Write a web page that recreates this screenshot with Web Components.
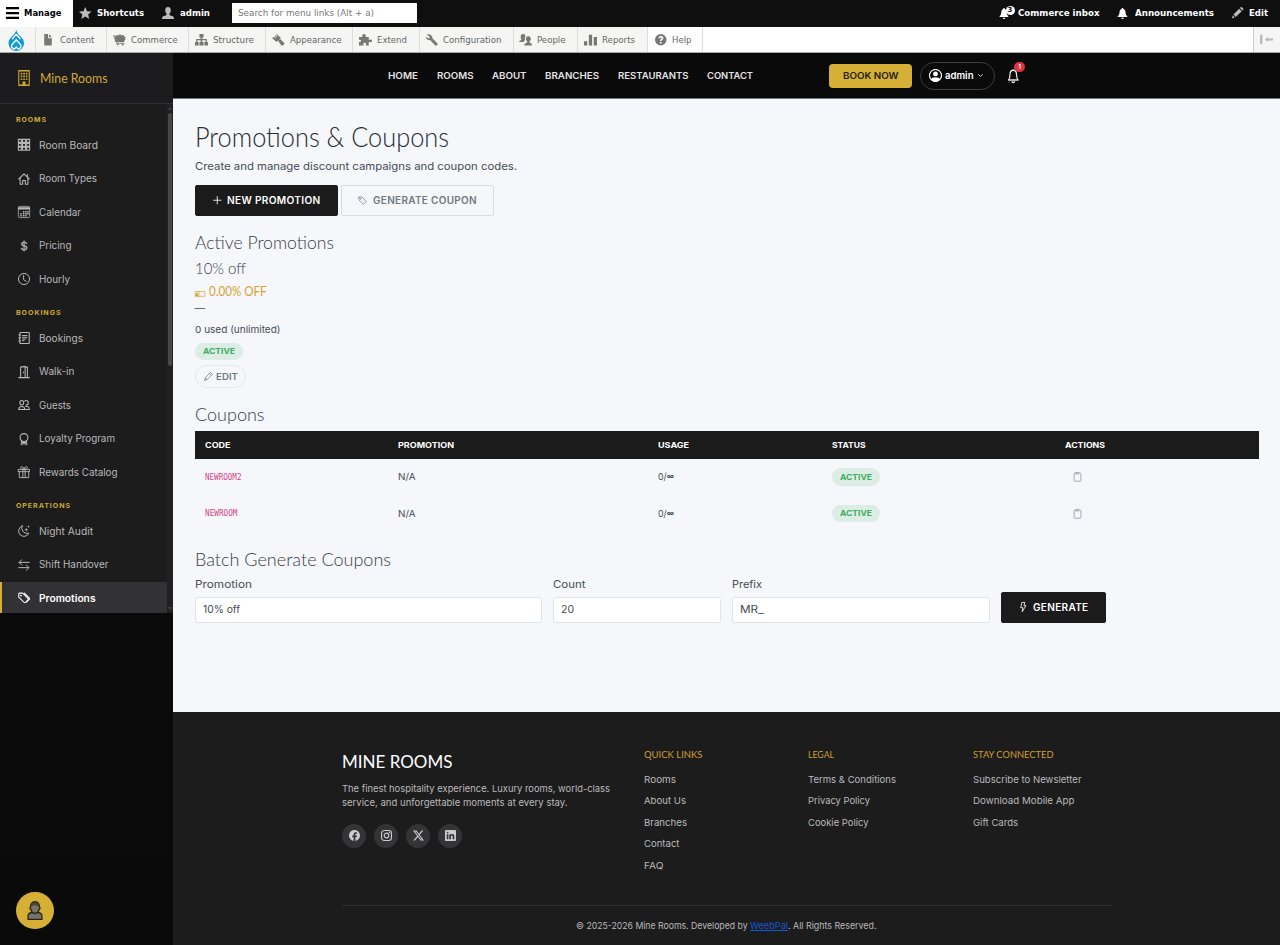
<!DOCTYPE html>
<html lang="en">
<head>
<meta charset="utf-8">
<title>Promotions &amp; Coupons | Mine Rooms</title>
<style>
html,body{margin:0;height:100%;background:#f5f7fb}
body{font-family:Inter,"Open Sans",sans-serif;font-size:9.8px;color:#454b55;overflow:hidden}
</style>
</head>
<body>
<app-shell></app-shell>
<script>
const def = (name, css, html, setup) => customElements.define(name, class extends HTMLElement {
  connectedCallback() {
    if (this.shadowRoot) return;
    const root = this.attachShadow({mode: 'open'});
    root.innerHTML = `<style>*{box-sizing:border-box}${css}</style>` + (typeof html === 'function' ? html(this) : html);
    if (setup) setup(this, root);
  }
});

/* Icon set, drawn on a 16-unit grid */
const F = d => `<path d="${d}" fill="currentColor" fill-rule="evenodd"/>`;
const S = (d, w = 1) => `<path d="${d}" fill="none" stroke="currentColor" stroke-width="${w}" stroke-linecap="round" stroke-linejoin="round"/>`;
const grid9 = [1, 6.3, 11.6].map(y => [0.5, 6, 11.5].map(x => `M${x} ${y - .5}h4v3.800h-4z`).join('')).join('');
const windows = [2.8, 5.6, 8.4].map(y => [3.6, 7, 10.4].map(x => `M${x} ${y}h2.200v1.600h-2.200z`).join('')).join('');
const ICONS = {
  menu: F('M0 0h16v3H0zM0 6.5h16v3H0zM0 13h16v3H0z'),
  star: F('M8 0l2.3 5.3 5.7.5-4.3 3.8L13 15.5 8 12.3 3 15.5l1.300-5.900L0 5.800l5.700-.5z'),
  user: F('M8 0c2.300 0 3.700 1.700 3.700 4.200 0 2-.7 3.300-1.700 4.300v1.700c.4 1 1.600 1.200 3.300 1.700 1.700.5 2.700 1.100 2.700 4.100H0c0-3 1-3.600 2.700-4.100C4.400 11.400 5.600 11.200 6 10.200V8.500C5 7.500 4.300 6.200 4.300 4.200 4.300 1.700 5.700 0 8 0z'),
  file: F('M2 0h6v6h6v10H2zM9.500 0L14 4.500H9.500z'),
  cart: F('M0 2h2.500L4 3.500 4.500 1 7 2l1.500-2L10.500 2l2.500-1 .5 2.500L16 4l-1.500 2.500 1 1.500-1.500 1v2.500H4.500l.5 1.500h9v1H13a1.300 1.300 0 11-2 0H7a1.300 1.300 0 11-2.500 0L3.500 11 2 10l1-2-2-1.500 1-1.500L1.500 3.500H0z'),
  tree: F('M5.500 0h5v5H9v2h5.500v4H16v5h-4.500v-5H13V8.700H9V11h1.500v5h-5v-5H7V8.700H3V11h1.500v5H0v-5h1.500V7H7V5H5.500z'),
  paint: F('M6 0l5 5.500L5.500 11 0 5.500 2 4l2 2 .8-.8-2-2L4 2l2 2 .7-.7L5 1zM10 7l5.500 6L14 15.500l-2.500.5-4-6.500z'),
  puzzle: F('M4 2.500C4 1 5 0 6.200 0s2.200 1 2.200 2.500L8 4h4v4h1.500C14.500 7 16 7.500 16 9.500s-1.500 2.500-2.500 1.500H12v5H8.500v-2C9 12.500 8 12 7 12s-2 .5-1.500 2v2H0v-5c2 .3 2.500-.5 2.500-1.500S2 7.700 0 8V4h4.300z'),
  wrench: F('M1 .5L5 4l-.3 2L2.500 6 0 3.500C-.5 6 1.500 9 5.500 8.500L12 15.500c1 1 2.500.5 3-.2.700-.8.800-1.800 0-2.600L8.500 6C9 2.500 5-.8 1 .5z'),
  people: F('M5 0c2 0 3 1.500 3 3.500C7 4.500 7 6 7.500 8c-.5 1-.7 2-2 3H0c0-2 3-2 3-3.500C1.500 5 1.500 0 5 0zM11.500 3c2 0 3 1.300 3 3.500 0 1.500-.6 2.500-1.500 3.500v1.500c.5 1 3 1 3 4.500H6.500c0-3.500 3-3.500 3.500-4.500V10C9 9 8.500 8 8.500 6.500c0-2.200 1-3.500 3-3.500z'),
  bars: F('M0 10h4v6H0zM6 1h4v15H6zM12 4h4v12h-4z'),
  help: F('M8 0a8 8 0 110 16A8 8 0 018 0zM4.700 6h2.200c0-.9.500-1.300 1.200-1.300s1.200.4 1.200 1.100c0 1.200-2.500 1.300-2.500 4h2.200c0-1.600 2.700-1.900 2.700-4.200C11.700 3.700 10.300 2.700 8.200 2.700 6 2.700 4.700 4 4.700 6zM6.800 11v2.300h2.300V11z'),
  bellf: F('M8 0c1 0 1.300.6 1.300 1.500C11.500 2 12.200 4 12.400 6.500c.2 3.500 1.600 4.500 3.100 6.500H.5C2 11 3.400 10 3.600 6.500 3.800 4 4.500 2 6.700 1.500 6.700.6 7 0 8 0zM6 14h4a2 2 0 01-4 0z'),
  pencilf: F('M0 16l1-4.500L3.800 14.500zM2 10.500L10 2.500l3.500 3.500-8.300 8zM11 1.500L12.500 0C13.500-.3 16.300 2.300 16 3.500L14.500 5z'),
  collapse: F('M0 1h3v14H0zM6 8l4-3.500v2h6v3h-6v2z'),
  building: S('M1 .7h14v14.600H1z', 1.4) + F(windows + 'M6 11.500h4v4H6z'),
  grid: `<path d="${grid9}" fill="none" stroke="currentColor" stroke-width="1.400"/>`,
  house: S('M1 8L8 1.200 15 8M2.800 6.500v8.500h3.400v-5h3.600v5h3.400V6.500M12.500 2v3', 1.4),
  calendar: `<rect x=".5" y=".5" width="15" height="15" rx="1.500" fill="none" stroke="currentColor"/>` + F('M0 1.500h16v3H0zM6.500 6.500h2v2h-2zM9.500 6.500h2v2h-2zM12.200 6.500h2v2h-2zM3 9.300h2v2H3zM6.500 9.300h2v2h-2zM9.500 9.300h2v2h-2zM12.200 9.300h2v2h-2zM3 12h2v2H3zM6.500 12h2v2h-2zM9.500 12h2v2h-2z'),
  dollar: `<g stroke="currentColor" stroke-width=".5">` + F('M4 10.781c.148 1.667 1.513 2.850 3.591 3.003V15h1.043v-1.216c2.270-.179 3.678-1.438 3.678-3.300 0-1.590-.947-2.510-2.956-3.028l-.722-.187V3.467c1.122.110 1.879.714 2.070 1.616h1.470c-.166-1.600-1.540-2.748-3.540-2.875V1H7.591v1.233c-1.939.230-3.270 1.472-3.270 3.156 0 1.454.966 2.483 2.661 2.917l.610.162v4.031c-1.149-.170-1.940-.8-2.131-1.718H4zm3.391-3.836c-1.043-.263-1.600-.825-1.600-1.616 0-.944.704-1.641 1.800-1.828v3.495l-.2-.05zm1.591 1.872c1.287.323 1.852.859 1.852 1.769 0 1.097-.826 1.828-2.200 1.939V8.730l.348.086z') + '</g>',
  clock: `<circle cx="8" cy="8" r="7.400" fill="none" stroke="currentColor" stroke-width="1.300"/>` + S('M7.500 3.500v5.500l3.500 2', 1.3),
  journal: `<rect x="2.500" y=".7" width="12.500" height="14.600" rx="1" fill="none" stroke="currentColor" stroke-width="1.400"/>` + S('M1 4h2.500M1 8h2.500M1 12h2.500M6 4.700h6M6 7h6M6 9.300h4.500M6 11.500h2', 1.3),
  door: S('M1 15.500h14M3.500 15V1.500l6-1V15M9.500 1.500H12.500V15M7.300 8v1', 1.4),
  guests: S('M1 14c0-3 1.500-4 4-4s4 1 4 4zM5 8a2.500 3 0 100-6 2.500 3 0 000 6zM11 8a2.500 2.800 0 100-6 2.700 2.700 0 00-2 .8M10 9.800c3.500-.5 5 1.200 5 4.200H9', 1.4),
  award: `<circle cx="8" cy="6" r="5.200" fill="none" stroke="currentColor" stroke-width="1.400"/>` + S('M4.500 10.500V15.500L8 14l3.500 1.500V10.500M6 12.500h4', 1.4),
  gift: S('M.7 4.500h14.600v3H.7zM1.700 7.500v8h12.600v-8M6.500 4.500v11M9.500 4.500v11M8 4.500C6 4.500 3 4 3.500 2S7.500.5 8 4.500c.5-4 4-4.500 4.500-2.500S10 4.500 8 4.500', 1.2),
  moon: S('M5.500 1.200A7.200 7.200 0 1014.500 11 7.400 7.400 0 015.500 1.200z', 1.3) + F('M11 3.500l.7 2 2 .7-2 .7-.7 2-.7-2-2-.7 2-.7zM14 0l.5 1.500L16 2l-1.500.5L14 4l-.5-1.500L12 2l1.500-.5z'),
  swap: S('M15 4.500H1.500M5 1L1.500 4.500 5 8M1 11.500h13.500M11 8l3.500 3.500L11 15', 1.3),
  tags: S('M1 2.500v4.200l7.300 7.300c.4.400 1 .4 1.400 0l3.800-3.800c.4-.4.400-1 0-1.400L6.200 1.500H2A1 1 0 001 2.500zM8.500 1.500l6.700 6.700c.4.400.4 1 0 1.400L11.500 13.500', 1.4) + F('M4 3.500a1.200 1.200 0 110 2.400 1.200 1.200 0 010-2.400z'),
  tag: S('M1.500 2.500v4.300l7.500 7.500c.4.400 1 .4 1.400 0l3.900-3.900c.4-.4.400-1 0-1.400L6.800 1.500H2.500a1 1 0 00-1 1z', 1.2) + `<circle cx="4.700" cy="4.700" r="1.300" fill="none" stroke="currentColor"/>`,
  plus: S('M8 1v14M1 8h14', 1.6),
  pencil: S('M12 1l3 3-9.500 9.500L1 15l1.500-4.500zM10 3l3 3M2.700 10.700l2.600 2.600', 1.3),
  clip: S('M5 2H3a1 1 0 00-1 1v11.500a1 1 0 001 1h10a1 1 0 001-1V3a1 1 0 00-1-1h-2M5.500.7h5V3.300h-5z', 1.5),
  bolt: S('M6 .7h5L9.300 5.800H13L6 15.500 7.300 9H4z', 1.4),
  ticket: S('M1 4.500h14v8.500H1zM6 4.500V13', 1.2) + F('M1 7.500h3.500V13H1z'),
  person: F('M11 6a3 3 0 11-6 0 3 3 0 016 0z') + F('M0 8a8 8 0 1116 0A8 8 0 010 8zm8-7a7 7 0 00-5.468 11.370C3.242 11.226 4.805 10 8 10s4.757 1.225 5.468 2.370A7 7 0 008 1z') + `<circle cx="8" cy="8" r="7.300" fill="none" stroke="currentColor" stroke-width="1.200"/>`,
  chev: S('M2 5l6 6 6-6', 2.6),
  bell: S('M8 1.200c-3 .4-4.200 2.300-4.200 5C3.800 9.500 3 11.500 1.800 12.500h12.400c-1.200-1-2-3-2-6.300 0-2.700-1.200-4.600-4.200-5zM6.500 14.500a1.600 1.600 0 003 0', 1.6),
  facebook: F('M16 8.049c0-4.446-3.582-8.050-8-8.050C3.580 0-.002 3.603-.002 8.050c0 4.017 2.926 7.347 6.750 7.951v-5.625h-2.030V8.050H6.750V6.275c0-2.017 1.195-3.131 3.022-3.131.876 0 1.791.157 1.791.157v1.980h-1.009c-.993 0-1.303.621-1.303 1.258v1.510h2.218l-.354 2.326H9.250V16c3.824-.604 6.750-3.934 6.750-7.951z'),
  instagram: `<rect x=".8" y=".8" width="14.400" height="14.400" rx="4" fill="none" stroke="currentColor" stroke-width="1.600"/><circle cx="8" cy="8" r="3.400" fill="none" stroke="currentColor" stroke-width="1.600"/><circle cx="12.300" cy="3.700" r="1" fill="currentColor"/>`,
  twitter: F('M12.600.75h2.454l-5.360 6.142L16 15.250h-4.937l-3.867-5.070-4.425 5.070H.316l5.733-6.570L0 .75h5.063l3.495 4.633L12.601.75Zm-.86 13.028h1.360L4.323 2.145H2.865z'),
  linkedin: F('M0 1.146C0 .513.526 0 1.175 0h13.650C15.474 0 16 .513 16 1.146v13.708c0 .633-.526 1.146-1.175 1.146H1.175C.526 16 0 15.487 0 14.854zm4.943 12.248V6.169H2.542v7.225zm-1.200-8.212c.837 0 1.358-.554 1.358-1.248-.015-.709-.520-1.248-1.342-1.248S2.400 3.226 2.400 3.934c0 .694.521 1.248 1.327 1.248zm4.908 8.212V9.359c0-.216.016-.432.080-.586.173-.431.568-.878 1.232-.878.869 0 1.216.662 1.216 1.634v3.865h2.401V9.250c0-2.220-1.184-3.252-2.764-3.252-1.274 0-1.845.7-2.165 1.193v.025V6.169h-2.400c.030.678 0 7.225 0 7.225z'),
  drupal: `<path d="M8 0C7.500 2 6 3.300 4.300 4.600 2 6.200.5 7.600.5 10.200a7.500 5.800 0 0015 0c0-2.600-1.500-4-3.800-5.600C10 3.300 8.500 2 8 0z" fill="#0f97d6"/><path d="M8 3.200L4 7M8 3.200L12 7M8 7.500l3.700 3.300a2.300 1.900 0 11-3.200 2.700L8 12.900l-.5.600a2.300 1.900 0 11-3.200-2.700z" fill="none" stroke="#fff" stroke-width="1.200"/>`,
  avatar: `<path d="M1 15.500V13q0-3 4-3.300h6q4 .3 4 3.300v2.500z" fill="#74746a" stroke="#29240f" stroke-width="1.200"/><path d="M3.500 5q0-4 4.500-4.300 4.500.3 4.500 4.300c1 .8.500 2-.3 2C11.500 9.300 10 10.500 8 10.500S4.500 9.300 3.800 7c-.8 0-1.300-1.200-.3-2z" fill="#77746b" stroke="#29240f" stroke-width="1.200"/><path d="M4 5q0-4 4-4.200 4 .2 4 4.200L9 3.500 5 4z" fill="#4a4332"/>`
};
def('x-icon', ':host{display:inline-flex;flex:none}svg{display:block;overflow:visible}', el => {
  const s = el.getAttribute('s') || 12;
  return `<svg width="${el.getAttribute('w') || s}" height="${s}" viewBox="0 0 16 16" preserveAspectRatio="none">${ICONS[el.getAttribute('name')]}</svg>`;
});

/* One line of text, widened or narrowed to the measure given in "w" */
def('x-t', ':host{display:inline-block;white-space:pre;flex:none;justify-self:start;transform-origin:0 50%}', '<slot></slot>', el => {
  const w = +el.getAttribute('w'); if (!w) return;
  const nat = el.getBoundingClientRect().width;
  if (!nat) return;
  el.style.transform = `scaleX(${w / nat})`;
  el.style.marginRight = w - nat + 'px';
});

/* Admin toolbar */
def('admin-bar', `:host{display:flex;height:27px;background:#0f0f0f;color:#fff;font:bold 9px "DejaVu Sans",sans-serif;align-items:center;line-height:26px}
 .i{display:flex;align-items:center;height:27px;padding-bottom:1px}.m{background:#fff;color:#000;width:73px;padding:0 0 1px 6px;gap:5px}
 .s{padding-left:6px;gap:5.500px;width:89px}.a{gap:5.500px;width:70px}x-icon{color:#bbb}.m x-icon{color:#000}
 .q{background:#fff;color:#777;font-weight:400;width:184.500px;height:20px;line-height:20px;padding-left:6px;margin-bottom:1px}
 .sp{flex:1}x-icon.w{color:#fff}.b{position:relative;margin-right:9px}.n{position:absolute;left:7px;top:6px;width:9px;height:9px;border-radius:50%;background:#fff;color:#111;font-size:7px;line-height:9px;text-align:center}`,
 `<div class="i m"><x-icon name="menu" w="13" s="12"></x-icon><x-t w="37.500">Manage</x-t></div>
  <div class="i s"><x-icon name="star" s="12.500"></x-icon><x-t w="47">Shortcuts</x-t></div>
  <div class="i a"><x-icon name="user" s="12"></x-icon><x-t w="30">admin</x-t></div>
  <div class="q"><x-t w="136">Search for menu links (Alt + a)</x-t></div><div class="sp"></div>
  <div class="i b"><x-icon class="w" name="bellf" w="10" s="11"></x-icon><span class="n">3</span></div>
  <div class="i" style="width:99.500px;padding-left:.5px"><x-t w="81.500">Commerce inbox</x-t></div>
  <div class="i" style="gap:7px;width:115px"><x-icon class="w" name="bellf" s="11"></x-icon><x-t w="79">Announcements</x-t></div>
  <div class="i" style="gap:5.500px;width:48px"><x-icon name="pencilf" s="11.500"></x-icon><x-t w="19">Edit</x-t></div>`);

const tray = [['file','Content',34.5,71,10],['cart','Commerce',46.5,82,13],['tree','Structure',41,77,13],['paint','Appearance',51.5,87,13],['puzzle','Extend',30,66.5,13],['wrench','Configuration',58.5,94,12],['people','People',28.5,64.5,13],['bars','Reports',33,70,13],['help','Help',19.5,55,11.5]];
def('admin-tray', `:host{display:flex;height:26px;background:#fff;color:#666;font:9px "DejaVu Sans",sans-serif;line-height:25px;border-bottom:1px solid #aaa}
 .d,.i{display:flex;align-items:center;border-right:1px solid #ddd;height:25px;background:#f5f5f3}.d{width:36px;padding:2px 0 0 8px}
 .i{padding-top:1px}.k{width:23.500px;display:flex;justify-content:center;padding-left:1px}.k x-icon{color:#777}
 .i.last{background:#fff}.sp{flex:1}.c{width:27px;border-left:1px solid #ccc;background:#f5f5f5;color:#bbb;padding-left:6px;display:flex;align-items:center}`,
 `<div class="d"><x-icon name="drupal" w="16.500" s="21"></x-icon></div>` +
 tray.map(([n, t, w, W, s]) => `<div class="i${n === 'help' ? ' last' : ''}" style="width:${W}px"><span class="k"><x-icon name="${n}" w="${s}" s="11.500"></x-icon></span><x-t w="${w}">${t}</x-t></div>`).join('') +
 `<div class="sp"></div><div class="c"><x-icon name="collapse" w="13" s="11"></x-icon></div>`);

/* Side navigation */
def('nav-item', `:host{display:flex;align-items:center;height:31.500px;margin-bottom:2px;padding:1px 0 0 18px;gap:9.200px;color:#b9b9b9;border-left:0 solid #d6b036;box-sizing:border-box}
 :host([active]){background:#323234;color:#fff;font-weight:600;border-left-width:2px;padding-left:16px}`,
 el => `<x-icon name="${el.getAttribute('icon')}" s="12"></x-icon><slot></slot>`);
const side = [['ROOMS',31,[['grid','Room Board',59],['house','Room Types',58],['calendar','Calendar',42],['dollar','Pricing',32.5],['clock','Hourly',31]]],
 ['BOOKINGS',45.5,[['journal','Bookings',44],['door','Walk-in',35.5],['guests','Guests',32],['award','Loyalty Program',76],['gift','Rewards Catalog',78.5]]],
 ['OPERATIONS',55,[['moon','Night Audit',54],['swap','Shift Handover',69.5],['tags','Promotions',56.5]]]];
def('side-nav', `:host{display:flex;flex-direction:column;width:173px;flex:none;background:linear-gradient(#121212,#0b0b0b 45%,#0a0a0a)}
 .brand{height:50.500px;background:#1c1c1e;border-bottom:1px solid #2f2f31;display:flex;align-items:center;padding-left:18px;gap:9.500px;color:#cfa933;font-family:Lato,sans-serif;font-size:14px}
 .body{display:flex;height:509.500px;background:#1c1c1d;overflow:hidden}.list{width:167px;font-size:9.800px}
 .h{height:25.500px;padding:10px 0 0 16px;line-height:12px;font-size:6.800px;font-weight:700;letter-spacing:.9px;color:#cda935}
 .bar{width:6px;display:flex;flex-direction:column;align-items:center;justify-content:space-between;color:#444;background:#202022;padding:3px 0}.th{width:4px;height:253px;background:#48484a;border-radius:2px}
 .a{border:2px solid transparent;border-bottom:3px solid #444;border-top:0}.b{border:2px solid transparent;border-top:3px solid #444;border-bottom:0}
 .sp{flex:1}.fab{margin:0 0 16px 16px;width:37.500px;height:37.500px;border-radius:50%;background:#d6b036;display:flex;align-items:center;justify-content:center}`,
 `<div class="brand"><x-icon name="building" s="16" w="12"></x-icon><x-t w="67.500">Mine Rooms</x-t></div>
 <div class="body"><div class="list">` + side.map(([h, w, l]) => `<div class="h"><x-t w="${w}">${h}</x-t></div>` + l.map(([i, t, tw]) => `<nav-item icon="${i}"${t === 'Promotions' ? ' active' : ''}><x-t w="${tw}">${t}</x-t></nav-item>`).join('')).join('') +
 `</div><div class="bar"><i class="a"></i><i class="th"></i><i style="height:235px"></i><i class="b"></i></div></div>
 <div class="sp"></div><div class="fab"><x-icon name="avatar" w="16" s="19"></x-icon></div>`);

/* Site header */
const links = [['HOME',30],['ROOMS',36.5],['ABOUT',34.5],['BRANCHES',54],['RESTAURANTS',70.5],['CONTACT',46]];
def('site-header', `:host{display:flex;height:46px;background:#0a0a0a;color:#e4e4e4;align-items:center;border-bottom:1px solid #777;padding-left:215px;font-weight:600;font-size:8.800px;box-sizing:border-box}
 nav{display:flex;gap:18.800px}.book{margin-left:75.500px;width:83px;height:24px;border-radius:4px;background:#d6b036;color:#1c1c1c;display:flex;align-items:center;justify-content:center}
 .u{margin-left:8px;width:75px;height:28px;border:1px solid #3c3c3c;border-radius:14px;display:flex;align-items:center;padding-left:8px;color:#fff;gap:3.500px;font-size:9.600px}
 .b{margin-left:12px;position:relative;display:flex}.n{position:absolute;left:7.500px;top:-7px;width:10.500px;height:10.500px;border-radius:50%;background:#dc3545;color:#fff;font-size:6.500px;line-height:10.500px;text-align:center}`,
 `<nav>${links.map(([t, w]) => `<x-t w="${w}">${t}</x-t>`).join('')}</nav>
 <div class="book"><x-t w="55.500">BOOK NOW</x-t></div>
 <div class="u"><x-icon name="person" s="13"></x-icon><x-t w="28.500">admin</x-t><x-icon name="chev" s="5" style="margin-left:1px"></x-icon></div>
 <div class="b"><x-icon name="bell" w="12.500" s="14"></x-icon><span class="n">1</span></div>`);

/* Page pieces */
def('x-btn', `:host{display:inline-flex;align-items:center;height:31px;background:#1b1b1c;color:#fff;font-weight:600;font-size:9.700px;letter-spacing:.3px;border-radius:2px;border:1px solid #1b1b1c;box-sizing:border-box}
 :host([ghost]){background:transparent;color:#717880;border-color:#d9dce0}`, '<slot></slot>');
def('x-badge', `:host{display:inline-flex;align-items:center;justify-content:center;width:48px;height:17.500px;border-radius:9px;background:#dcede5;color:#3fad60;font-weight:700;font-size:7.800px}`, '<x-t w="32">ACTIVE</x-t>');
def('x-field', `:host{display:flex;flex-direction:column}.l{height:18px;line-height:19px;margin-bottom:4px;font-size:10.600px}.v{height:26px;border:1px solid #e0e3e8;border-radius:3px;background:#fff;padding-left:7.500px;display:flex;align-items:center;font-size:10.400px}`,
 '<div class="l"><slot name="label"></slot></div><div class="v"><slot></slot></div>');
def('coupon-table', `:host{display:block}.r{display:grid;grid-template-columns:193px 260px 174px 232.500px 1fr;align-items:center;height:36.500px;padding-left:10.500px;font-size:9.600px}
 .h{height:28px;background:#1b1b1c;color:#fff;font-weight:700;font-size:8.200px}.c{font:8.200px "DejaVu Sans Mono","Liberation Mono",monospace;color:#d63f85}x-icon{color:#9aa0a8;margin-left:8px}small{font-size:8px;font-weight:700;vertical-align:1px}`,
 `<div class="r h">${[['CODE', 25.5], ['PROMOTION', 56], ['USAGE', 31], ['STATUS', 33.5], ['ACTIONS', 40]].map(([t, w]) => `<span><x-t w="${w}">${t}</x-t></span>`).join('')}</div>` +
 [['NEWROOM2', 36.5], ['NEWROOM', 32.5]].map(([c, w]) => `<div class="r"><span class="c"><x-t w="${w}">${c}</x-t></span><span><x-t w="17.500">N/A</x-t></span><span><x-t w="16">0/<small>∞</small></x-t></span><x-badge></x-badge><x-icon name="clip" w="9" s="9.500"></x-icon></div>`).join(''));
def('promo-page', `:host{display:flex;flex-direction:column;height:613px;padding:20px 21px 0 21.500px;background:#f5f7fb;box-sizing:border-box}
 .d{font-family:Lato,sans-serif;font-weight:300;height:26px;line-height:25px;font-size:18.500px;color:#3c4048}
 .t{height:36px;line-height:35px;font-size:27.500px;color:#2a2d33}.sub{height:22px;line-height:23px;font-size:10.800px}
 .row{display:flex}.o{height:20px;line-height:20px;font-size:12.500px;color:#d8a12e;display:flex;align-items:center;gap:3.500px}.o x-t{font-weight:400}
 .e{width:51.500px;height:23px;border:1px solid #e3e6ea;border-radius:12px;display:flex;align-items:center;padding-left:8px;gap:3px;color:#72777f;font-weight:600;font-size:8.800px}`,
 `<div class="d t"><x-t w="254">Promotions &amp; Coupons</x-t></div>
 <div class="sub"><x-t w="322">Create and manage discount campaigns and coupon codes.</x-t></div>
 <div class="row" style="gap:3px;margin-top:7.500px"><x-btn style="width:143.500px;padding-left:17px;gap:6px"><x-icon name="plus" s="8.500"></x-icon><x-t w="93.500">NEW PROMOTION</x-t></x-btn>
 <x-btn ghost style="width:153px;padding-left:16px;gap:6px"><x-icon name="tag" s="9"></x-icon><x-t w="104">GENERATE COUPON</x-t></x-btn></div>
 <div class="d" style="margin-top:14px"><x-t w="139">Active Promotions</x-t></div>
 <div class="d" style="font-size:16.500px"><x-t w="51">10% off</x-t></div>
 <div class="d o"><x-icon name="ticket" w="10.500" s="9" style="margin-top:3px"></x-icon><x-t w="57.500">0.00% OFF</x-t></div>
 <div style="height:14px;line-height:13px;font-size:10.500px"><x-t w="10.500">—</x-t></div>
 <div style="height:18px;line-height:19px;margin-top:4.500px;font-size:9.600px"><x-t w="85.500">0 used (unlimited)</x-t></div>
 <x-badge style="margin-top:4.500px"></x-badge>
 <div class="e" style="margin-top:4.500px"><x-icon name="pencil" s="9"></x-icon><x-t w="22">EDIT</x-t></div>
 <div class="d" style="margin-top:14px"><x-t w="69.500">Coupons</x-t></div>
 <coupon-table style="margin-top:3px"></coupon-table>
 <div class="d" style="margin-top:15px"><x-t w="196">Batch Generate Coupons</x-t></div>
 <div class="row" style="gap:10.700px;margin-top:2px;align-items:flex-end">
 <x-field style="width:347.500px"><x-t slot="label" w="57">Promotion</x-t><x-t w="37">10% off</x-t></x-field>
 <x-field style="width:168.500px"><x-t slot="label" w="32.500">Count</x-t><x-t w="13">20</x-t></x-field>
 <x-field style="width:258px"><x-t slot="label" w="30">Prefix</x-t><x-t w="23.500">MR_</x-t></x-field>
 <x-btn style="width:105px;padding-left:17px;gap:5.500px"><x-icon name="bolt" w="8.500" s="10"></x-icon><x-t w="55.500">GENERATE</x-t></x-btn></div>`);

/* Footer */
def('foot-col', `:host{display:block}.h{font-family:Lato,sans-serif;font-size:10.400px;color:#cf9f31;height:14px;line-height:13px;margin-bottom:7px}::slotted(*){display:block!important;height:21.400px;line-height:21.400px}`,
 el => `<div class="h"><x-t w="${el.getAttribute('hw')}">${el.getAttribute('head')}</x-t></div><slot></slot>`);
const col = (h, hw, l) => `<foot-col head="${h}" hw="${hw}">${l.map(([t, w]) => `<div><x-t w="${w}">${t}</x-t></div>`).join('')}</foot-col>`;
def('site-footer', `:host{display:flex;flex-direction:column;flex:1;background:#1c1c1d;color:#bababa;padding:36px 168px 0 169.300px;font-size:9.500px;box-sizing:border-box}
 .g{display:grid;grid-template-columns:302px 164.200px 164.200px 1fr;height:157.500px;border-bottom:1px solid #303032}
 .n{font-family:Lato,sans-serif;color:#fff;font-size:18px;height:24px;line-height:23px;margin:2px 0 7.500px}.p{height:14.700px;line-height:14.700px}
 .s{display:flex;gap:8px;margin-top:13px}.s span{width:24px;height:24px;border-radius:50%;background:#343436;display:flex;align-items:center;justify-content:center;color:#ccc}
 .c{text-align:center;height:39px;line-height:39px;display:flex;justify-content:center;font-size:9.200px;margin-right:1px}a{color:#1558d6}a x-t{text-decoration:underline}`,
 `<div class="g"><div><div class="n"><x-t w="110.500">MINE ROOMS</x-t></div>
 <div class="p"><x-t w="268">The finest hospitality experience. Luxury rooms, world-class</x-t></div><div class="p"><x-t w="225.500">service, and unforgettable moments at every stay.</x-t></div>
 <div class="s">${['facebook', 'instagram', 'twitter', 'linkedin'].map(n => `<span><x-icon name="${n}" s="11"></x-icon></span>`).join('')}</div></div>
 ${col('QUICK LINKS', 58.5, [['Rooms', 32], ['About Us', 42], ['Branches', 43], ['Contact', 35.5], ['FAQ', 19.5]])}
 ${col('LEGAL', 26, [['Terms &amp; Conditions', 88], ['Privacy Policy', 62], ['Cookie Policy', 60.5]])}
 ${col('STAY CONNECTED', 80.5, [['Subscribe to Newsletter', 108.5], ['Download Mobile App', 101.5], ['Gift Cards', 45]])}</div>
 <div class="c"><x-t w="174">© 2025-2026 Mine Rooms. Developed by </x-t><a><x-t w="38">WeebPal</x-t></a><x-t w="88.500">. All Rights Reserved.</x-t></div>`);

def('app-shell', `:host{display:flex;flex-direction:column;height:945px;width:1280px}.b{display:flex;flex:1}.m{flex:1;display:flex;flex-direction:column;min-width:0}`,
 `<admin-bar></admin-bar><admin-tray></admin-tray><div class="b"><side-nav></side-nav><div class="m"><site-header></site-header><promo-page></promo-page><site-footer></site-footer></div></div>`);
</script>
</body>
</html>
